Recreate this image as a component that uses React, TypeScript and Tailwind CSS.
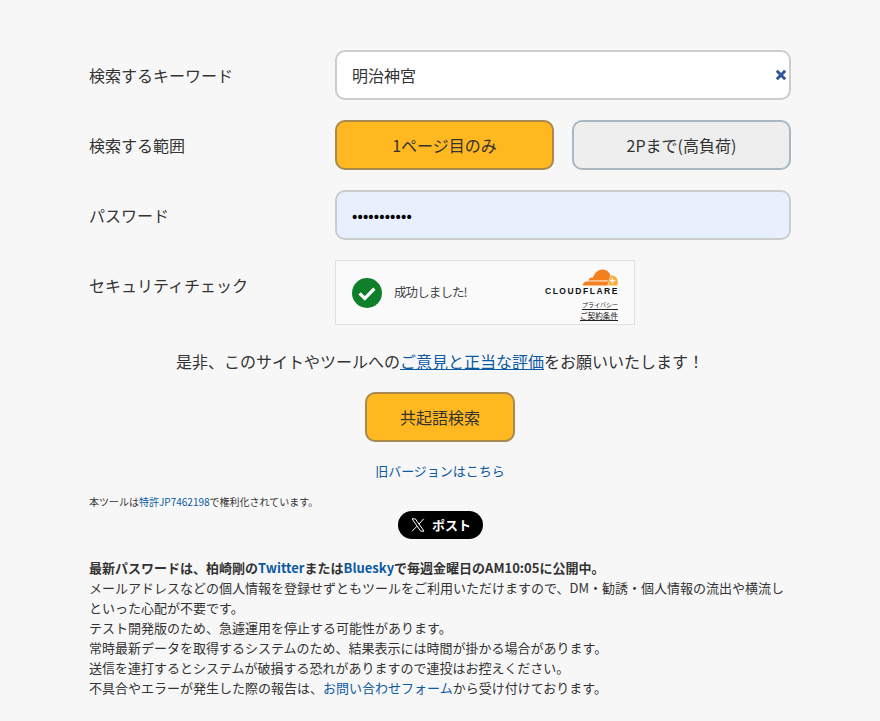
import React from "react";

function Row({ label, children, className = "" }: { label: string; children: React.ReactNode; className?: string }) {
  return (
    <div className={`flex ${className}`}>
      <div className="w-[246px] shrink-0 text-[16px] leading-[50px] text-[#333333]">{label}</div>
      <div className="flex-1">{children}</div>
    </div>
  );
}

function Cloud() {
  return (
    <svg width="36" height="17" viewBox="0 0 36 17" className="mr-[1px] block">
      <path d="M0.5 16.5 C1 13.6 3 12 6 12.2 C7 9 9.4 8.2 11 8.8 C12.5 3.4 16.5 .4 20.5 .4 C24.5 .4 27.4 2.8 28.4 6.2 L25.4 16.5 Z" fill="#f48120" />
      <path d="M26.4 16.5 C26.8 12 28 7.6 29.6 6.2 C33.2 6.2 35.8 9.2 35.8 13 C35.8 14.4 35.6 15.6 35.2 16.5 Z" fill="#faad3f" />
      <path d="M5 11.6 L26 11.2 L25.6 12.4 L5 12.6 Z" fill="#fff" opacity="0.8" />
      <path d="M30.4 8 L31.2 10.8 L34.2 11.6 L31.2 12.4 L30.4 15 L29.6 12.4 L26.6 11.6 L29.6 10.8 Z" fill="#fff" opacity="0.9" />
    </svg>
  );
}

export default function App() {
  return (
    <div className="min-h-[721px] bg-[#f7f7f7] font-['Noto_Sans_CJK_JP','Noto_Sans',sans-serif] text-[#333333]">
      <div className="mx-auto w-[702px] pt-[50px]">
        <Row label="検索するキーワード">
          <div className="relative h-[50px] rounded-[10px] border-2 border-[#cccccc] bg-white pl-[15px] text-[16px] leading-[46px] text-[#333333]">
            明治神宮
            <svg viewBox="0 0 12 12" className="absolute right-[2px] top-[17px] h-[12px] w-[12px]">
              <path d="M1.8 1.8 L10.2 10.2 M10.2 1.8 L1.8 10.2" stroke="#2f5597" strokeWidth="3" fill="none" />
            </svg>
          </div>
        </Row>

        <Row label="検索する範囲" className="mt-[20px]">
          <div className="flex gap-[18px]">
            <div className="h-[50px] w-[219px] rounded-[10px] border-2 border-[#a8894f] bg-[#ffb820] text-center text-[16px] leading-[46px] text-[#333333]">
              1ページ目のみ
            </div>
            <div className="h-[50px] w-[219px] rounded-[10px] border-2 border-[#a9b7c3] bg-[#eeeeee] text-center text-[16px] leading-[46px] text-[#333333]">
              2Pまで(高負荷)
            </div>
          </div>
        </Row>

        <Row label="パスワード" className="mt-[20px]">
          <div className="h-[50px] rounded-[10px] border-2 border-[#cccccc] bg-[#e8f0fe] pl-[15px] text-[14px] font-bold leading-[47px] tracking-[0.15px] text-black">
            •••••••••••
          </div>
        </Row>

        <Row label="セキュリティチェック" className="mt-[20px]">
          <div className="flex h-[65px] w-[300px] items-center border border-[#e0e0e0] bg-[#fafafa] pl-[16px]">
            <svg width="30" height="30" viewBox="0 0 30 30" className="shrink-0">
              <circle cx="15" cy="15" r="15" fill="#0f7f2c" />
              <path d="M7.6 15.4 L12.8 20.4 L22.4 10.6" stroke="#fff" strokeWidth="3.2" fill="none" />
            </svg>
            <span className="ml-[12px] w-[150px] shrink-0 text-[12.5px] tracking-[-0.9px] text-[#444444]">成功しました!</span>
            <div className="flex w-[75px] flex-col items-end pt-[4px]">
              <Cloud />
              <div className="mt-[1px] whitespace-nowrap font-['Liberation_Sans',sans-serif] text-[8.5px] font-bold leading-[9px] tracking-[1.55px] text-[#111111]">CLOUDFLARE</div>
              <div className="mt-[4px] mr-[1px] whitespace-nowrap border-b border-[#222222] text-[6px] leading-[9px] text-[#222222]">プライバシー</div>
              <div className="mt-[1px] mr-[1px] whitespace-nowrap border-b border-[#222222] text-[7.6px] leading-[9px] text-[#222222]">ご契約条件</div>
            </div>
          </div>
        </Row>

        <p className="mt-[23px] text-center text-[16px] leading-[26px] text-[#333333]">
          是非、このサイトやツールへの<a className="text-[#0b5aa2] underline">ご意見と正当な評価</a>をお願いいたします！
        </p>

        <div className="mt-[18px] flex justify-center">
          <div className="h-[50px] w-[150px] rounded-[10px] border-2 border-[#a8894f] bg-[#ffb820] text-center text-[16px] leading-[46px] text-[#333333]">
            共起語検索
          </div>
        </div>

        <p className="mt-[19px] text-center text-[13px] leading-[20px] text-[#0b5aa2]">旧バージョンはこちら</p>

        <p className="mt-[14px] text-[10px] leading-[14px] text-[#333333]">
          本ツールは<span className="text-[#0b5aa2]">特許JP7462198</span>で権利化されています。
        </p>

        <div className="mt-[2px] flex justify-center">
          <div className="flex h-[28px] w-[85px] items-center justify-center gap-[6px] rounded-full bg-black pl-[1px] text-[13px] font-bold text-white">
            <svg viewBox="0 0 24 24" className="h-[16px] w-[16px]" fill="none" stroke="#ffffff" strokeWidth="1.5">
              <path d="M3 2.8 H8 L21 21.2 H16 Z" />
              <path d="M20.6 2.6 L13.4 10.8 M10.6 13.8 L3 21.4" />
            </svg>
            ポスト
          </div>
        </div>

        <div className="mt-[19px] text-[13px] leading-[20px] text-[#333333]">
          <p className="font-bold">
            最新パスワードは、柏崎剛の<span className="text-[#0b5aa2]">Twitter</span>または<span className="text-[#0b5aa2]">Bluesky</span>で毎週金曜日のAM10:05に公開中。
          </p>
          <p>メールアドレスなどの個人情報を登録せずともツールをご利用いただけますので、DM・勧誘・個人情報の流出や横流しといった心配が不要です。</p>
          <p>テスト開発版のため、急遽運用を停止する可能性があります。</p>
          <p>常時最新データを取得するシステムのため、結果表示には時間が掛かる場合があります。</p>
          <p>送信を連打するとシステムが破損する恐れがありますので連投はお控えください。</p>
          <p>不具合やエラーが発生した際の報告は、<span className="text-[#0b5aa2]">お問い合わせフォーム</span>から受け付けております。</p>
        </div>
      </div>
    </div>
  );
}
